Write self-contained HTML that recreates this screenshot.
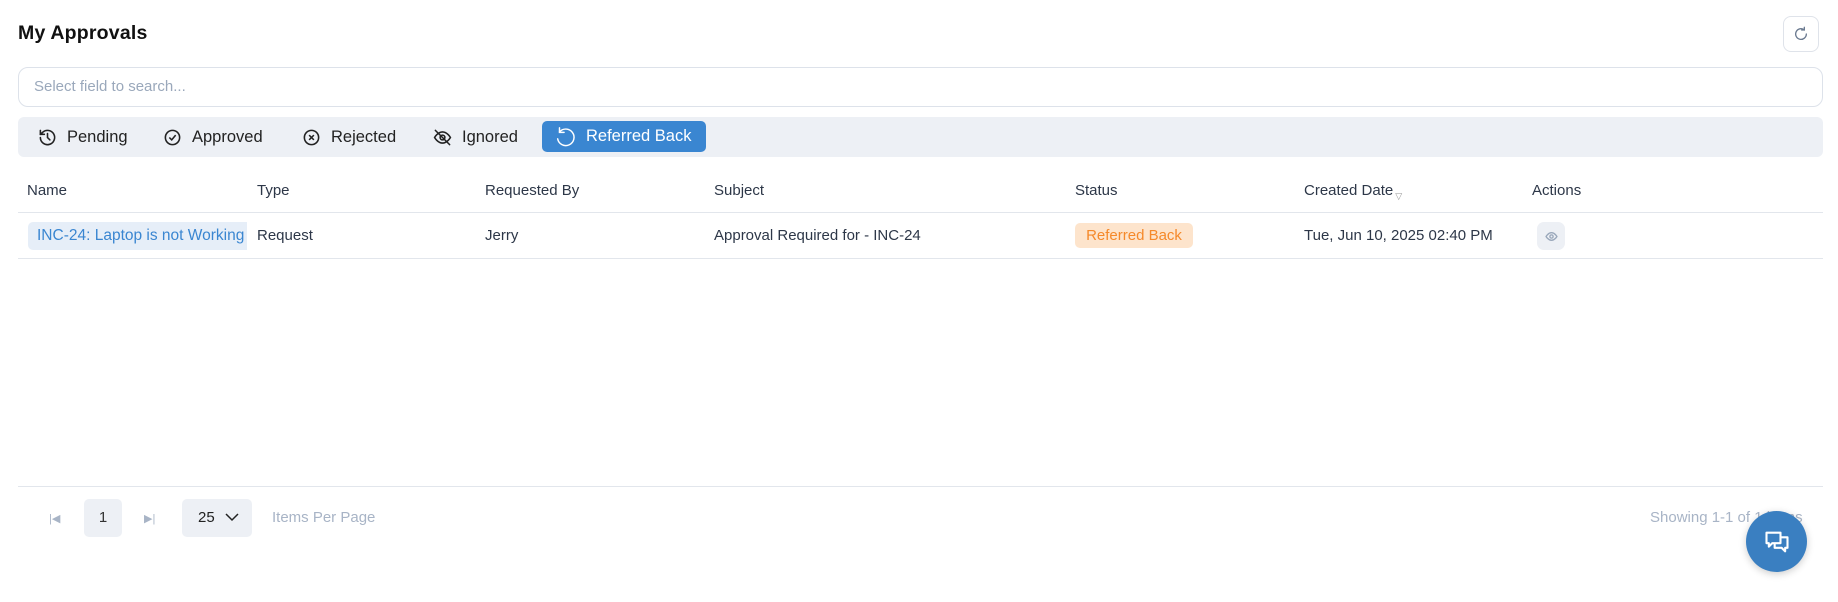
<!DOCTYPE html>
<html><head><meta charset="utf-8"><style>
*{box-sizing:border-box;margin:0;padding:0}
body{width:1838px;height:602px;background:#fff;font-family:"Liberation Sans",sans-serif;color:#1f2937;position:relative;overflow:hidden}
.a{position:absolute}
.t{font-size:15px;color:#2d3748;white-space:nowrap}
.tab{position:absolute;top:117px;height:40px;display:flex;align-items:center;font-size:16.5px;color:#222}
.tab svg{margin-right:10px}
</style></head><body>
<div class="a" style="left:18px;top:22px;font-size:19.5px;color:#111;font-weight:bold;letter-spacing:0.2px">My Approvals</div>
<div class="a" style="left:1783px;top:16px;width:36px;height:36px;border:1px solid #dfe3ea;border-radius:8px;display:flex;align-items:center;justify-content:center">
<svg width="16" height="16" viewBox="0 0 24 24" fill="none" stroke="#6b7a90" stroke-width="2" stroke-linecap="round"><path d="M20 12a8 8 0 1 1-3-6.2"/><path d="M17 2v4h-4"/></svg></div>
<div class="a" style="left:18px;top:67px;width:1805px;height:40px;border:1px solid #dde2ea;border-radius:10px;padding-left:15px;line-height:38px;font-size:15px;color:#9aa8bb">Select field to search...</div>
<div class="a" style="left:18px;top:117px;width:1805px;height:40px;background:#edf0f5;border-radius:6px"></div>
<div class="tab" style="left:38px"><svg width="19" height="19" viewBox="0 0 24 24" fill="none" stroke="#222" stroke-width="2" stroke-linecap="round"><path d="M3 12a9 9 0 1 0 3-6.7L3 8"/><path d="M3 3v5h5"/><path d="M12 7v5l3 3"/></svg>Pending</div>
<div class="tab" style="left:163px"><svg width="19" height="19" viewBox="0 0 24 24" fill="none" stroke="#222" stroke-width="2"><circle cx="12" cy="12" r="9"/><path d="M8 12l3 3 5-6"/></svg>Approved</div>
<div class="tab" style="left:302px"><svg width="19" height="19" viewBox="0 0 24 24" fill="none" stroke="#222" stroke-width="2"><circle cx="12" cy="12" r="9"/><path d="M9 9l6 6M15 9l-6 6"/></svg>Rejected</div>
<div class="tab" style="left:433px"><svg width="19" height="19" viewBox="0 0 24 24" fill="none" stroke="#222" stroke-width="2" stroke-linecap="round"><path d="M2 12s4-7 10-7 10 7 10 7-4 7-10 7S2 12 2 12z"/><circle cx="12" cy="12" r="3"/><path d="M3 3l18 18"/></svg>Ignored</div>
<div class="a" style="left:542px;top:121px;width:164px;height:31px;background:#3a86d1;border-radius:5px;display:flex;align-items:center;padding-left:12px;color:#fff;font-size:16.5px"><svg width="22" height="22" viewBox="0 0 24 24" fill="none" stroke="#fff" stroke-width="1.6" stroke-linecap="round" style="margin-right:10px"><path d="M6 6.5A9 9 0 1 1 4 14"/><path d="M6 2v5h5" /></svg>Referred Back</div>
<div class="a t" style="left:27px;top:182px">Name</div>
<div class="a t" style="left:257px;top:182px">Type</div>
<div class="a t" style="left:485px;top:182px">Requested By</div>
<div class="a t" style="left:714px;top:182px">Subject</div>
<div class="a t" style="left:1075px;top:182px">Status</div>
<div class="a t" style="left:1304px;top:182px">Created Date<span style="font-size:9px;color:#999;vertical-align:-4px;margin-left:2px">▽</span></div>
<div class="a t" style="left:1532px;top:182px">Actions</div>
<div class="a" style="left:18px;top:212px;width:1805px;height:1px;background:#e2e6ec"></div>
<div class="a" style="left:28px;top:222px;width:219px;height:28px;background:#e6eef8;border-radius:5px 0 0 5px;overflow:hidden;white-space:nowrap;line-height:28px;padding-left:9px;font-size:15.5px;color:#3a86d1">INC-24: Laptop is not Working</div>
<div class="a t" style="left:257px;top:227px">Request</div>
<div class="a t" style="left:485px;top:227px">Jerry</div>
<div class="a t" style="left:714px;top:227px">Approval Required for - INC-24</div>
<div class="a" style="left:1075px;top:223px;width:118px;height:25px;background:#fde4cc;border-radius:5px;color:#f5892a;font-size:15px;line-height:25px;text-align:center">Referred Back</div>
<div class="a t" style="left:1304px;top:227px">Tue, Jun 10, 2025 02:40 PM</div>
<div class="a" style="left:1537px;top:222px;width:28px;height:28px;background:#edf0f5;border-radius:7px;display:flex;align-items:center;justify-content:center"><svg width="13" height="13" viewBox="0 0 24 24" fill="none" stroke="#9aa8bb" stroke-width="2.5"><path d="M2 12s4-7 10-7 10 7 10 7-4 7-10 7S2 12 2 12z"/><circle cx="12" cy="12" r="3"/></svg></div>
<div class="a" style="left:18px;top:258px;width:1805px;height:1px;background:#e2e6ec"></div>
<div class="a" style="left:18px;top:486px;width:1805px;height:1px;background:#e2e6ec"></div>
<div class="a" style="left:49px;top:512px;color:#a8b4c6;font-size:11px">|◀</div>
<div class="a" style="left:84px;top:499px;width:38px;height:38px;background:#edf0f5;border-radius:5px;text-align:center;line-height:38px;font-size:15px;color:#333">1</div>
<div class="a" style="left:144px;top:512px;color:#a8b4c6;font-size:11px">▶|</div>
<div class="a" style="left:182px;top:499px;width:70px;height:38px;background:#edf0f5;border-radius:5px;line-height:38px;padding-left:16px;font-size:15px;color:#222">25 <svg width="14" height="10" viewBox="0 0 14 10" style="margin-left:6px"><path d="M1 2l6 6 6-6" fill="none" stroke="#222" stroke-width="1.5"/></svg></div>
<div class="a" style="left:272px;top:509px;font-size:15px;color:#a8b4c6">Items Per Page</div>
<div class="a" style="left:1650px;top:509px;font-size:15px;color:#a8b4c6">Showing 1-1 of 1 items</div>
<div class="a" style="left:1746px;top:511px;width:61px;height:61px;border-radius:50%;background:#3a7fc1;box-shadow:0 2px 8px rgba(0,0,0,.2);display:flex;align-items:center;justify-content:center"><svg width="28" height="28" viewBox="0 0 24 24" fill="none" stroke="#fff" stroke-width="1.8" stroke-linejoin="round"><path d="M3 4h12v9H8l-3 3v-3H3z"/><path d="M15 8h6v9h-2v3l-3-3h-6v-4"/></svg></div>
</body></html>
